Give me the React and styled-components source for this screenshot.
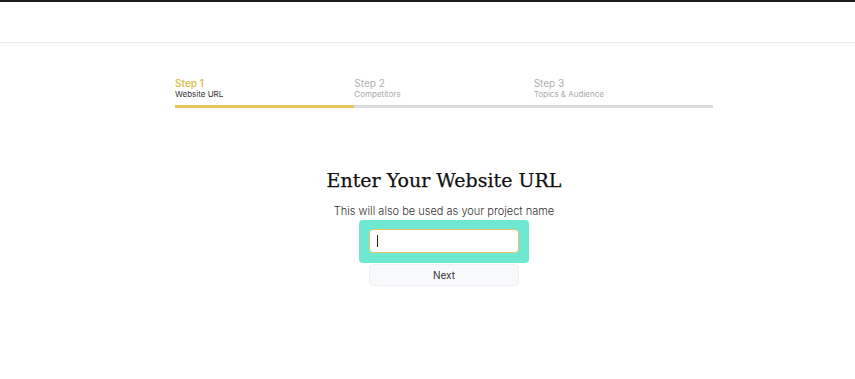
import React from 'react';
import styled, { createGlobalStyle } from 'styled-components';

const GlobalStyle = createGlobalStyle`
  html, body {
    margin: 0;
    padding: 0;
    background: #fff;
  }
  body {
    font-family: Inter, "Open Sans", sans-serif;
  }
`;

const steps = [
  { title: 'Step 1', label: 'Website URL' },
  { title: 'Step 2', label: 'Competitors' },
  { title: 'Step 3', label: 'Topics & Audience' }
];

export default function App() {
  const active = 0;
  return (
    <>
      <GlobalStyle />
      <Page>
        <TopStrip />
        <Header />
        <Main>
          <Stepper>
            {steps.map((s, i) => (
              <Step key={s.title} active={i <= active}>
                <StepTitle active={i <= active}>{s.title}</StepTitle>
                <StepLabel active={i <= active}>{s.label}</StepLabel>
              </Step>
            ))}
          </Stepper>
          <Form>
            <Heading>Enter Your Website URL</Heading>
            <Sub>This will also be used as your project name</Sub>
            <FocusRing>
              <UrlInput autoFocus defaultValue="" />
              <Caret />
            </FocusRing>
            <NextButton>Next</NextButton>
          </Form>
        </Main>
      </Page>
    </>
  );
}

const Page = styled.div`
  width: 855px;
  height: 379px;
  overflow: hidden;
  background: #fff;
`;

const TopStrip = styled.div`
  height: 2px;
  background: #1e1e1e;
`;

const Header = styled.div`
  height: 40px;
  border-bottom: 1px solid #ededed;
  box-shadow: 0 1px 3px rgba(0, 0, 0, 0.03);
`;

const Main = styled.div`
  display: flex;
  flex-direction: column;
  align-items: center;
  padding-left: 33px;
`;

const Stepper = styled.div`
  display: grid;
  grid-template-columns: repeat(3, 1fr);
  width: 538px;
  margin-top: 34px;
`;

const Step = styled.div`
  display: flex;
  flex-direction: column;
  padding-bottom: 5px;
  border-bottom: 3px solid ${p => (p.active ? '#e3c55c' : '#dcdcdf')};
`;

const StepTitle = styled.div`
  font-size: 10px;
  line-height: 12px;
  font-weight: ${p => (p.active ? 600 : 400)};
  color: ${p => (p.active ? '#e0bf52' : '#b0b0b0')};
`;

const StepLabel = styled.div`
  font-size: 8px;
  line-height: 11px;
  color: ${p => (p.active ? '#333' : '#ababab')};
`;

const Form = styled.div`
  display: flex;
  flex-direction: column;
  align-items: center;
  margin-top: 60px;
`;

const Heading = styled.h1`
  margin: 0;
  font-family: "DejaVu Serif", "Liberation Serif", serif;
  font-weight: 400;
  font-size: 19px;
  line-height: 24px;
  color: #111;
  -webkit-text-stroke: 0.25px #111;
`;

const Sub = styled.p`
  margin: 12px 0 0;
  font-size: 11px;
  line-height: 14px;
  font-weight: 300;
  color: #333;
`;

const FocusRing = styled.div`
  position: relative;
  margin-top: 2px;
  padding: 9px 10px 10px;
  background: #6fe8d3;
  border-radius: 4px;
`;

const UrlInput = styled.input`
  display: block;
  box-sizing: border-box;
  width: 150px;
  height: 24px;
  padding: 0 6px;
  border: 1px solid #e2c566;
  border-radius: 4px;
  background: #fff;
  outline: none;
  font-family: inherit;
  font-size: 11px;
  caret-color: transparent;
`;

const Caret = styled.span`
  position: absolute;
  left: 18px;
  top: 15px;
  width: 1px;
  height: 12px;
  background: #222;
`;

const NextButton = styled.button`
  box-sizing: border-box;
  width: 150px;
  height: 22px;
  margin-top: 1px;
  border: 1px solid #eef0f3;
  border-radius: 4px;
  background: #f8f9fb;
  color: #333;
  font-family: inherit;
  font-size: 10px;
  cursor: pointer;
`;
